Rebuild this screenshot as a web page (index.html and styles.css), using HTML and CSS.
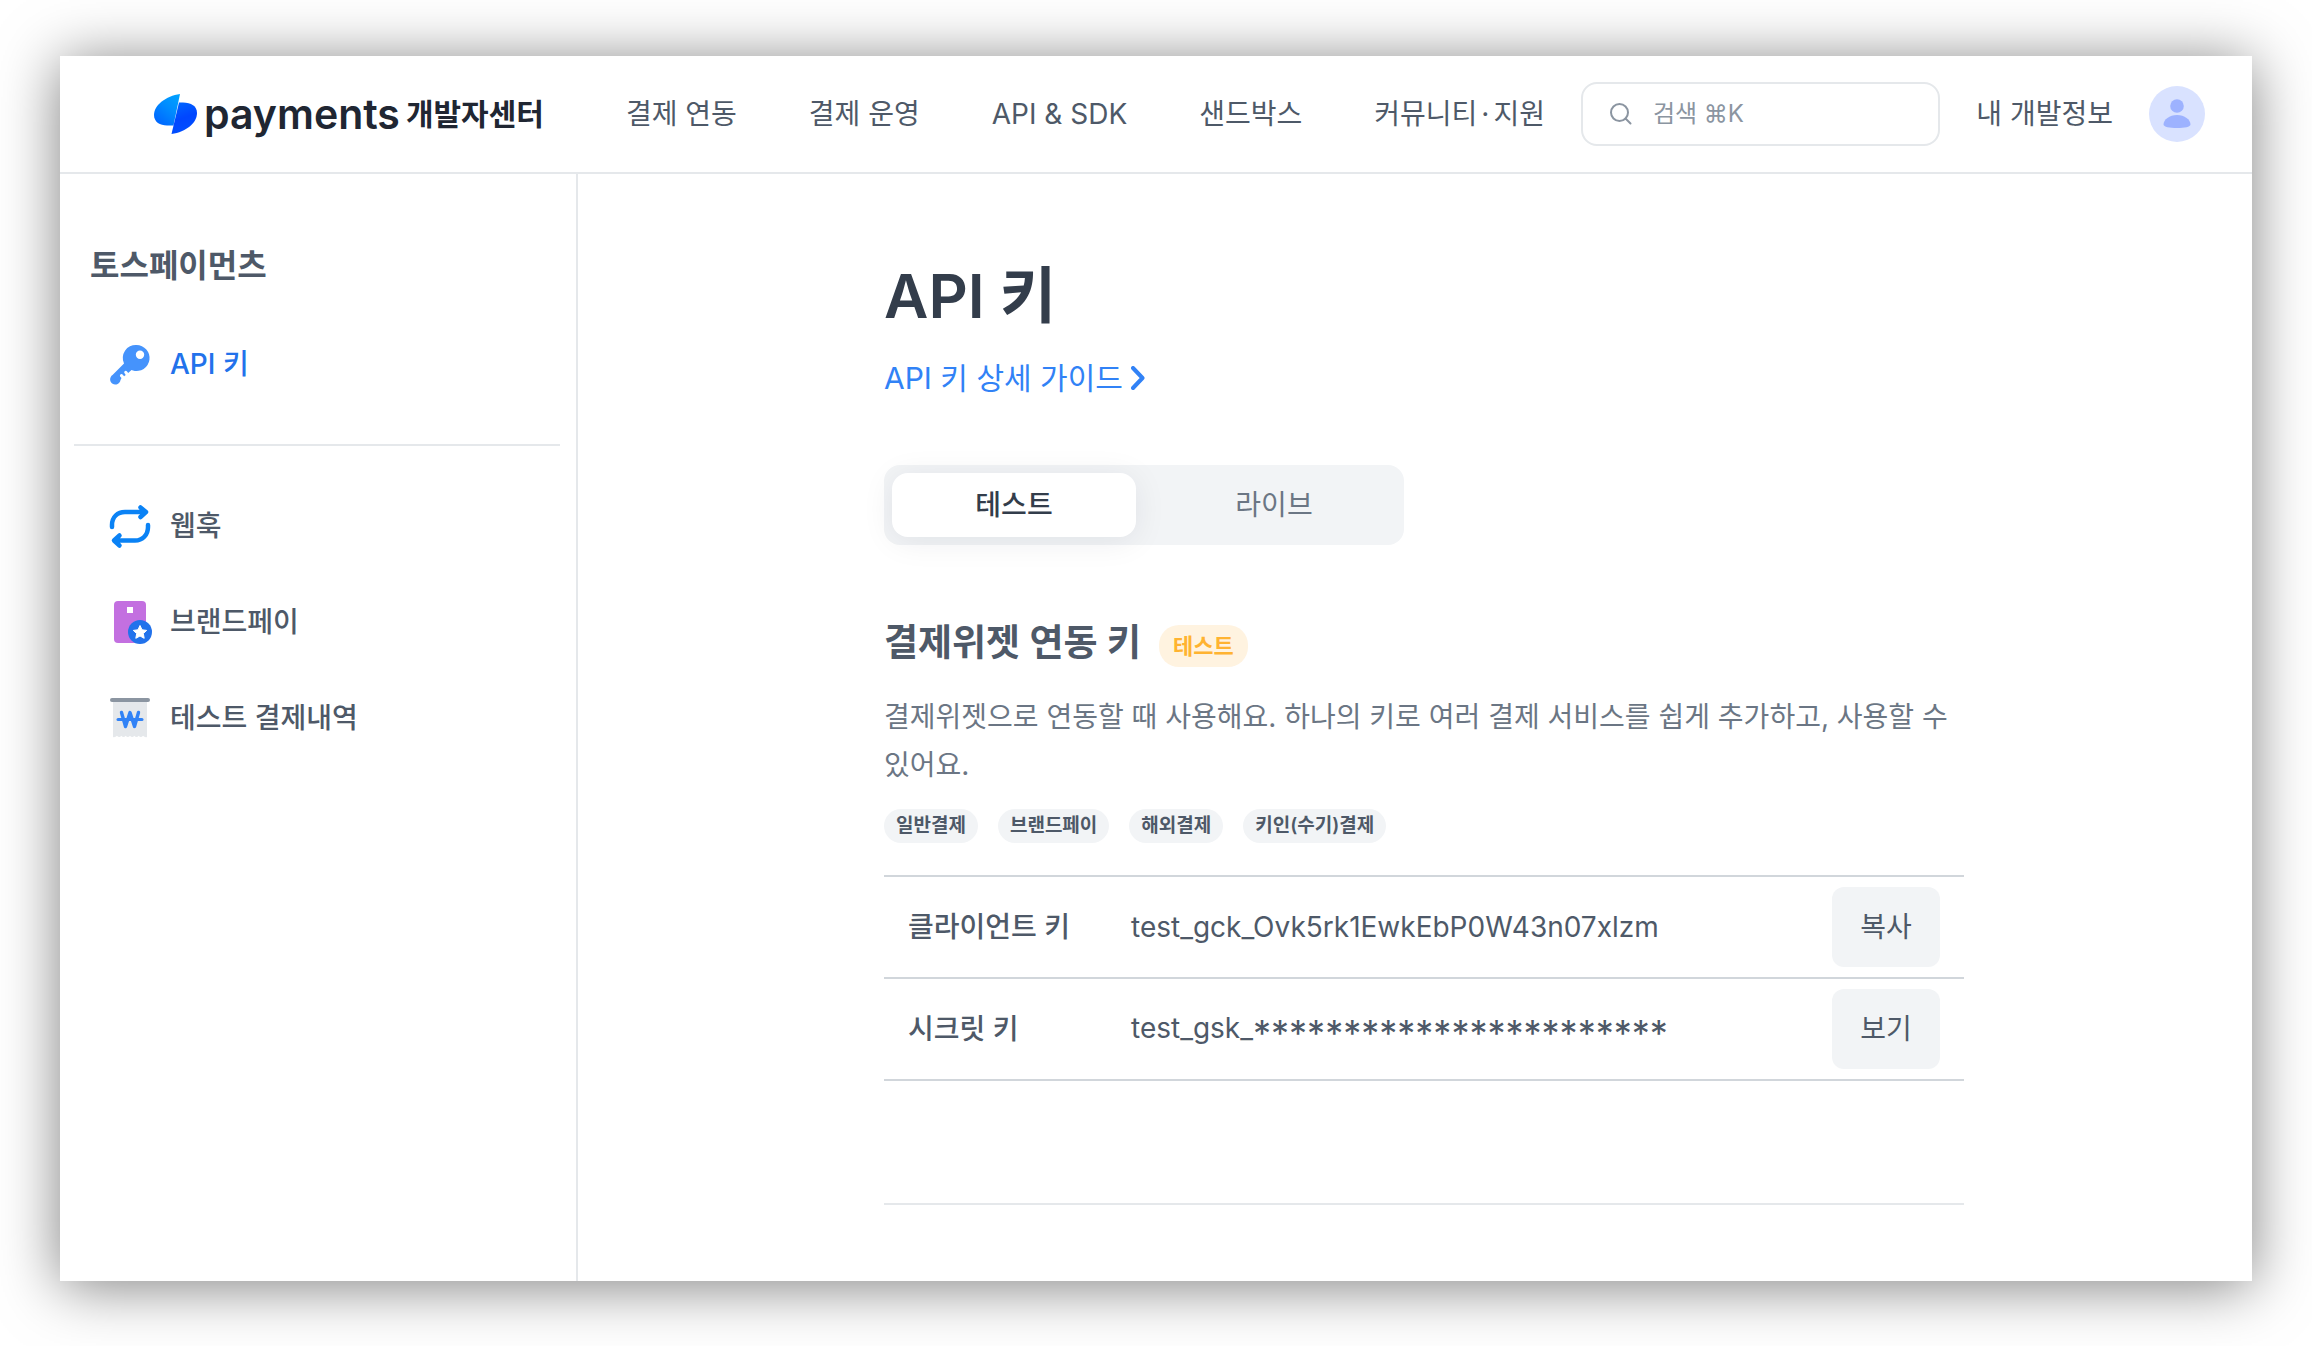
FILE: index.html
```html
<!DOCTYPE html>
<html lang="ko">

<head>
    <meta charset="UTF-8">
    <meta name="viewport" content="width=device-width, initial-scale=1.0">
    <title>API 키 | 토스페이먼츠 개발자센터</title>
    <link rel="stylesheet" href="styles.css">
</head>

<body>
    <div class="window">
        <header class="header">
            <a href="#" class="logo">
                <svg class="logo_mark" viewBox="0 0 44 40" aria-hidden="true">
                    <defs>
                        <linearGradient id="leafL" x1="1" y1="0" x2="0.3" y2="1">
                            <stop offset="0" stop-color="#00a5ff" />
                            <stop offset="0.5" stop-color="#008cff" />
                            <stop offset="1" stop-color="#0068ff" />
                        </linearGradient>
                        <linearGradient id="leafR" x1="0.3" y1="0" x2="0.6" y2="1">
                            <stop offset="0" stop-color="#0064ff" />
                            <stop offset="0.5" stop-color="#0046ff" />
                            <stop offset="1" stop-color="#0050ff" />
                        </linearGradient>
                    </defs>
                    <path d="M26 0C12 2 0 11 0 21c0 7 6 10.500 13 10.500h6.500z" fill="url(#leafL)" />
                    <path d="M25 8.500h4c8 0 14 3.500 14 10.500C43 29 32 38 17.500 40z" fill="url(#leafR)" />
                </svg>
                <span class="logo_en">payments</span>
                <span class="logo_ko">개발자센터</span>
            </a>
            <nav class="nav">
                <a href="#">결제 연동</a>
                <a href="#">결제 운영</a>
                <a href="#">API &amp; SDK</a>
                <a href="#">샌드박스</a>
                <a href="#">커뮤니티<span class="dot">·</span>지원</a>
            </nav>
            <label class="search">
                <svg viewBox="0 0 24 24" aria-hidden="true">
                    <circle cx="10.500" cy="10.500" r="8.500" />
                    <path d="M16.500 16.500l5 5" />
                </svg>
                <input type="text" placeholder="검색 ⌘K" aria-label="검색">
            </label>
            <a href="#" class="my_info">내 개발정보</a>
            <a href="#" class="avatar" aria-label="프로필">
                <svg viewBox="0 0 56 56" aria-hidden="true">
                    <circle cx="28" cy="28" r="28" fill="#d9e2ff" />
                    <circle cx="28" cy="20" r="6.800" fill="#9db2ff" />
                    <path d="M28 29c7.500 0 13.500 4.500 13.500 9.500 0 2.500-6 3.500-13.500 3.500s-13.500-1-13.500-3.500C14.500 33.500 20.500 29 28 29z" fill="#9db2ff" />
                </svg>
            </a>
        </header>

        <div class="body">
            <aside class="sidebar">
                <h2>토스페이먼츠</h2>
                <ul class="menu">
                    <li>
                        <a href="#" class="active">
                            <svg viewBox="0 0 40 40" aria-hidden="true">
                                <path fill="#4593fc" fill-rule="evenodd" d="M26.500 1a13 13 0 1 1-3.500 25.500l-1.500-.6-3.300 3.200-1.200-1.500a1.500 1.500 0 0 0-2.600 1.500l1.300 1.800-1.600 1.400-1.300-1.600a1.600 1.600 0 0 0-2.700 1.700l1.400 1.700-1 1.800A5.200 5.200 0 1 1 2.500 31L14 19.500A13 13 0 0 1 26.500 1zM30 6.500a4.200 4.200 0 1 0 .01 8.400A4.200 4.200 0 0 0 30 6.500z" />
                            </svg>
                            API 키
                        </a>
                    </li>
                </ul>
                <hr>
                <ul class="menu">
                    <li>
                        <a href="#">
                            <svg viewBox="0 0 40 40" aria-hidden="true">
                                <g fill="none" stroke="#0a82f5" stroke-width="4.500" stroke-linecap="round" stroke-linejoin="round">
                                    <path d="M2 21v-2C2 11 7.500 6 15 6h19M30.500 1.500L36 6l-5.500 5" />
                                    <path d="M38 19v2c0 8-5.500 13.500-13 13.500H6M9.500 29.500L4 34.500l5.500 5" />
                                </g>
                            </svg>
                            웹훅
                        </a>
                    </li>
                    <li>
                        <a href="#">
                            <svg viewBox="0 0 40 40" aria-hidden="true">
                                <rect x="4" y="-1" width="32" height="42" rx="4" fill="#c370e0" />
                                <rect x="17" y="5" width="6" height="6" fill="#fff" />
                                <circle cx="30" cy="30" r="12" fill="#2272eb" />
                                <path d="M30 23.500l2 4.300 4.700.6-3.400 3.200.9 4.700-4.200-2.300-4.200 2.300.9-4.700-3.400-3.200 4.700-.6z" fill="#fff" stroke="#fff" stroke-linejoin="round" />
                            </svg>
                            브랜드페이
                        </a>
                    </li>
                    <li>
                        <a href="#">
                            <svg viewBox="0 0 40 40" aria-hidden="true">
                                <path fill="#e5e8eb" d="M3 2h34v37q-2 .8-4-1.200-2.200 2.400-4.300 0-2.200 2.400-4.400 0-2.100 2.400-4.300 0-2.200 2.400-4.300 0-2.200 2.400-4.400 0-2.100 2.400-4.300 0-2 2-4 1.200z" />
                                <rect x="0" y="0" width="40" height="4" rx="2" fill="#8b95a1" />
                                <g fill="none" stroke="#3182f6" stroke-width="3.400" stroke-linecap="round" stroke-linejoin="round">
                                    <path d="M11.500 14.500l4 14 4.500-14 4.500 14 4-14" />
                                    <path stroke-width="3" d="M8 21.500h24" />
                                </g>
                            </svg>
                            테스트 결제내역
                        </a>
                    </li>
                </ul>
            </aside>

            <main class="main">
                <div class="content">
                    <h1>API 키</h1>
                    <a href="#" class="guide">
                        API 키 상세 가이드
                        <svg viewBox="0 0 14 24" aria-hidden="true">
                            <path d="M2 2l9.500 10L2 22" />
                        </svg>
                    </a>

                    <div class="tabs">
                        <button type="button" class="active">테스트</button>
                        <button type="button">라이브</button>
                    </div>

                    <div class="title">
                        <h3>결제위젯 연동 키</h3>
                        <span class="badge">테스트</span>
                    </div>
                    <p class="desc">결제위젯으로 연동할 때 사용해요. 하나의 키로 여러 결제 서비스를 쉽게 추가하고, 사용할 수 있어요.</p>
                    <ul class="tags">
                        <li>일반결제</li>
                        <li>브랜드페이</li>
                        <li>해외결제</li>
                        <li>키인(수기)결제</li>
                    </ul>

                    <table class="keys">
                        <tbody>
                            <tr>
                                <th scope="row">클라이언트 키</th>
                                <td>test_gck_Ovk5rk1EwkEbP0W43n07xlzm</td>
                                <td class="action"><button type="button">복사</button></td>
                            </tr>
                            <tr>
                                <th scope="row">시크릿 키</th>
                                <td>test_gsk_<span class="mask">***********************</span></td>
                                <td class="action"><button type="button">보기</button></td>
                            </tr>
                        </tbody>
                    </table>
                    <hr>
                </div>
            </main>
        </div>
    </div>
</body>

</html>
```

FILE: styles.css
```css
* {
    margin: 0;
    padding: 0;
    box-sizing: border-box;
}

body {
    padding: 56px 60px 65px;
    background: #fff;
    color: #4e5968;
    font-family: Inter, "Noto Sans CJK KR", sans-serif;
    font-size: 28px;
    line-height: 40px;
}

a {
    color: inherit;
    text-decoration: none;
}

ul {
    list-style: none;
}

hr {
    border: 0;
    border-top: 2px solid #e5e8eb;
}

button,
input {
    font: inherit;
    color: inherit;
    border: 0;
    background: none;
}

.window {
    background: #fff;
    box-shadow: 0 5px 56px rgba(0, 0, 0, 0.5);
}

/* 헤더 */
.header {
    display: flex;
    align-items: center;
    height: 118px;
    padding: 0 47px 0 94px;
    border-bottom: 2px solid #e5e8eb;
    white-space: nowrap;
}

.logo {
    display: flex;
    align-items: center;
    margin-right: 46px;
    color: #202632;
    font-weight: 600;
}

.logo_mark {
    width: 44px;
    height: 40px;
    margin-right: 6px;
}

.logo_en {
    margin-right: 6px;
    font-size: 41px;
}

.logo_ko {
    font-size: 30px;
}

.nav {
    display: flex;
}

.nav a {
    padding: 0 36px;
}

.nav .dot {
    margin: 0 4px;
}

.search {
    display: flex;
    flex: 1;
    align-items: center;
    height: 64px;
    padding: 0 26px;
    border: 2px solid #e5e8eb;
    border-radius: 16px;
    color: #8b95a1;
    font-size: 24px;
}

.search svg {
    flex: none;
    width: 24px;
    height: 24px;
    margin-right: 20px;
    fill: none;
    stroke: #8b95a1;
    stroke-width: 2;
    stroke-linecap: round;
}

.search input {
    width: 100%;
    min-width: 0;
    outline: none;
}

.search input::placeholder {
    color: #8b95a1;
}

.my_info {
    margin: 0 36px;
}

.avatar,
.avatar svg {
    display: block;
    width: 56px;
    height: 56px;
}

/* 사이드바 */
.body {
    display: flex;
}

.sidebar {
    flex: none;
    width: 518px;
    padding: 68px 16px 66px 14px;
    border-right: 2px solid #e5e8eb;
}

.sidebar h2 {
    margin-bottom: 46px;
    padding-left: 16px;
    font-size: 32px;
    line-height: 48px;
    font-weight: 600;
}

.sidebar hr {
    margin: 52px 0;
}

.menu {
    display: grid;
    gap: 40px;
}

.menu a {
    display: flex;
    align-items: center;
    gap: 20px;
    height: 56px;
    padding-left: 36px;
    font-weight: 500;
}

.menu a.active {
    color: #2272eb;
}

.menu svg {
    width: 40px;
    height: 40px;
    overflow: visible;
}

/* 본문 */
.main {
    flex: 1;
    padding: 82px 0 76px 18px;
}

.content {
    max-width: 1080px;
    margin: 0 auto;
}

h1 {
    margin-bottom: 20px;
    color: #333d4b;
    font-size: 61px;
    line-height: 80px;
    font-weight: 600;
}

.guide {
    display: flex;
    align-items: center;
    gap: 8px;
    margin-bottom: 65px;
    color: #3182f6;
    font-size: 30px;
    line-height: 44px;
}

.guide svg {
    width: 14px;
    height: 24px;
    fill: none;
    stroke: #3182f6;
    stroke-width: 4;
    stroke-linecap: round;
    stroke-linejoin: round;
}

.tabs {
    display: grid;
    grid-template-columns: 1fr 1fr;
    gap: 16px;
    width: 520px;
    padding: 8px;
    border-radius: 16px;
    background: #f2f4f6;
}

.tabs button {
    height: 64px;
    border-radius: 16px;
    color: #6b7684;
}

.tabs .active {
    background: #fff;
    box-shadow: 0 4px 32px rgba(0, 23, 51, 0.08);
    color: #333d4b;
    font-weight: 500;
}

.title {
    display: flex;
    align-items: center;
    gap: 18px;
    margin: 70px 0 22px;
}

.title h3 {
    font-size: 37px;
    line-height: 56px;
    font-weight: 600;
}

.badge {
    margin-top: 6px;
    padding: 0 14px;
    border-radius: 20px;
    background: #fff3e0;
    color: #ffb331;
    font-size: 22px;
    line-height: 42px;
    font-weight: 600;
}

.desc {
    color: #6b7684;
    line-height: 48px;
    word-break: keep-all;
}

.tags {
    display: flex;
    gap: 20px;
    margin: 20px 0 32px;
}

.tags li {
    padding: 0 12px;
    border-radius: 17px;
    background: #f2f4f6;
    font-size: 19px;
    line-height: 34px;
    font-weight: 600;
}

.keys {
    width: 100%;
    margin-bottom: 122px;
    border-top: 2px solid #d1d6db;
    border-spacing: 0;
}

.keys th,
.keys td {
    padding: 10px 0;
    border-bottom: 2px solid #d1d6db;
    text-align: left;
}

.keys th {
    width: 247px;
    padding-left: 24px;
    font-weight: 500;
}

.keys .mask {
    font-size: 36px;
    line-height: 1;
    vertical-align: -8px;
}

.keys .action {
    width: 132px;
    padding-right: 24px;
}

.keys button {
    display: block;
    width: 108px;
    height: 80px;
    border-radius: 12px;
    background: #f2f4f6;
}
```
